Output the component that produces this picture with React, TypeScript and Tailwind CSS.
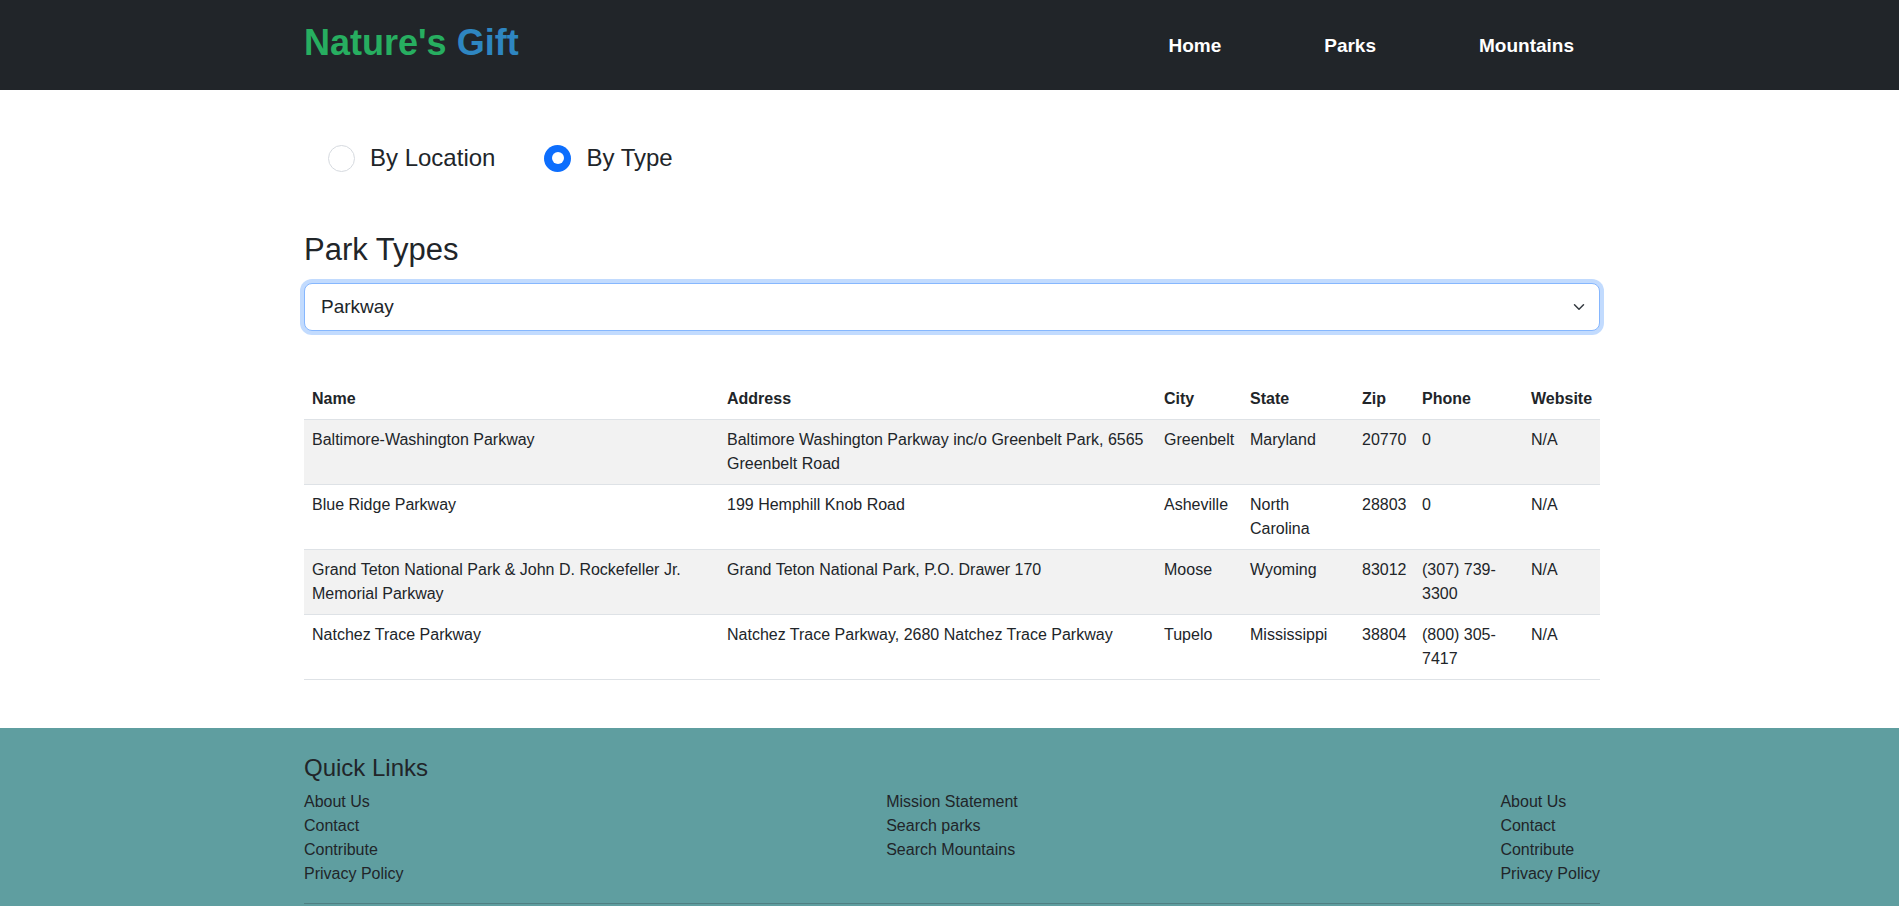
import React from 'react'

type Park = {
  name: string
  address: string
  city: string
  state: string
  zip: string
  phone: string
  website: string
}

const PARKS: Park[] = [
  {
    name: 'Baltimore-Washington Parkway',
    address: 'Baltimore Washington Parkway inc/o Greenbelt Park, 6565 Greenbelt Road',
    city: 'Greenbelt',
    state: 'Maryland',
    zip: '20770',
    phone: '0',
    website: 'N/A',
  },
  {
    name: 'Blue Ridge Parkway',
    address: '199 Hemphill Knob Road',
    city: 'Asheville',
    state: 'North Carolina',
    zip: '28803',
    phone: '0',
    website: 'N/A',
  },
  {
    name: 'Grand Teton National Park & John D. Rockefeller Jr. Memorial Parkway',
    address: 'Grand Teton National Park, P.O. Drawer 170',
    city: 'Moose',
    state: 'Wyoming',
    zip: '83012',
    phone: '(307) 739-3300',
    website: 'N/A',
  },
  {
    name: 'Natchez Trace Parkway',
    address: 'Natchez Trace Parkway, 2680 Natchez Trace Parkway',
    city: 'Tupelo',
    state: 'Mississippi',
    zip: '38804',
    phone: '(800) 305-7417',
    website: 'N/A',
  },
]

const COLUMNS = ['Name', 'Address', 'City', 'State', 'Zip', 'Phone', 'Website']

function Radio({ label, checked }: { label: string; checked?: boolean }) {
  return (
    <label className="flex items-center gap-[15px] cursor-pointer">
      {checked ? (
        <span className="flex h-[27px] w-[27px] items-center justify-center rounded-full bg-[#0d6efd]">
          <span className="h-[12px] w-[12px] rounded-full bg-white" />
        </span>
      ) : (
        <span className="h-[27px] w-[27px] rounded-full border border-[#d6dadf] bg-white" />
      )}
      <span>{label}</span>
    </label>
  )
}

export default function App() {
  return (
    <div className="min-h-screen bg-white font-['Liberation_Sans',Arial,sans-serif] text-[#212529]">
      <nav className="h-[90px] bg-[#212529]">
        <div className="ml-[304px] flex h-full w-[1296px] items-center justify-between">
          <a className="pb-[4px] text-[36px] font-bold leading-none">
            <span className="text-[#27ae60]">Nature's</span>{' '}
            <span className="text-[#2e86c1]">Gift</span>
          </a>
          <ul className="mr-[26px] flex gap-[103px] text-[19px] font-bold leading-none text-white">
            <li>Home</li>
            <li>Parks</li>
            <li>Mountains</li>
          </ul>
        </div>
      </nav>

      <main className="ml-[304px] w-[1296px] pt-[50px] pb-[48px]">
        <div className="flex items-center gap-[49px] pl-6 text-[24px] leading-[36px]">
          <Radio label="By Location" />
          <Radio label="By Type" checked />
        </div>

        <h2 className="mt-[55px] mb-[15px] text-[31px] font-medium leading-[1.2]">Park Types</h2>

        <div className="flex h-[48px] items-center justify-between rounded-lg border border-[#86b7fe] bg-white pl-4 pr-3 text-[19px] shadow-[0_0_0_4px_rgba(13,110,253,0.25)]">
          <span>Parkway</span>
          <svg width="16" height="12" viewBox="0 0 16 16" fill="none">
            <path d="M2 5l6 6 6-6" stroke="#343a40" strokeWidth="2" strokeLinecap="round" strokeLinejoin="round" />
          </svg>
        </div>

        <table className="mt-[48px] w-full table-fixed border-collapse text-[16px] leading-6">
          <colgroup>
            <col className="w-[415px]" />
            <col className="w-[437px]" />
            <col className="w-[86px]" />
            <col className="w-[112px]" />
            <col className="w-[60px]" />
            <col className="w-[109px]" />
            <col className="w-[77px]" />
          </colgroup>
          <thead>
            <tr className="border-b border-[#dee2e6]">
              {COLUMNS.map(c => (
                <th key={c} className="p-2 text-left font-bold">{c}</th>
              ))}
            </tr>
          </thead>
          <tbody>
            {PARKS.map((p, i) => (
              <tr key={p.name} className={`border-b border-[#dee2e6] align-top ${i % 2 === 0 ? 'bg-[#f2f2f2]' : 'bg-white'}`}>
                <td className="p-2">{p.name}</td>
                <td className="p-2">{p.address}</td>
                <td className="p-2">{p.city}</td>
                <td className="p-2">{p.state}</td>
                <td className="p-2">{p.zip}</td>
                <td className="p-2">{p.phone}</td>
                <td className="p-2">{p.website}</td>
              </tr>
            ))}
          </tbody>
        </table>
      </main>

      <footer className="bg-[#5f9ea0]">
        <div className="ml-[304px] w-[1296px] pt-[25px] pb-10">
          <h4 className="mb-2 text-[24px] font-medium leading-[29px]">Quick Links</h4>
          <div className="flex justify-between text-[16px] leading-6">
            <ul>
              <li>About Us</li>
              <li>Contact</li>
              <li>Contribute</li>
              <li>Privacy Policy</li>
            </ul>
            <ul>
              <li>Mission Statement</li>
              <li>Search parks</li>
              <li>Search Mountains</li>
            </ul>
            <ul>
              <li>About Us</li>
              <li>Contact</li>
              <li>Contribute</li>
              <li>Privacy Policy</li>
            </ul>
          </div>
          <hr className="mt-[17px] border-t border-[#212529]/25" />
        </div>
      </footer>
    </div>
  )
}
